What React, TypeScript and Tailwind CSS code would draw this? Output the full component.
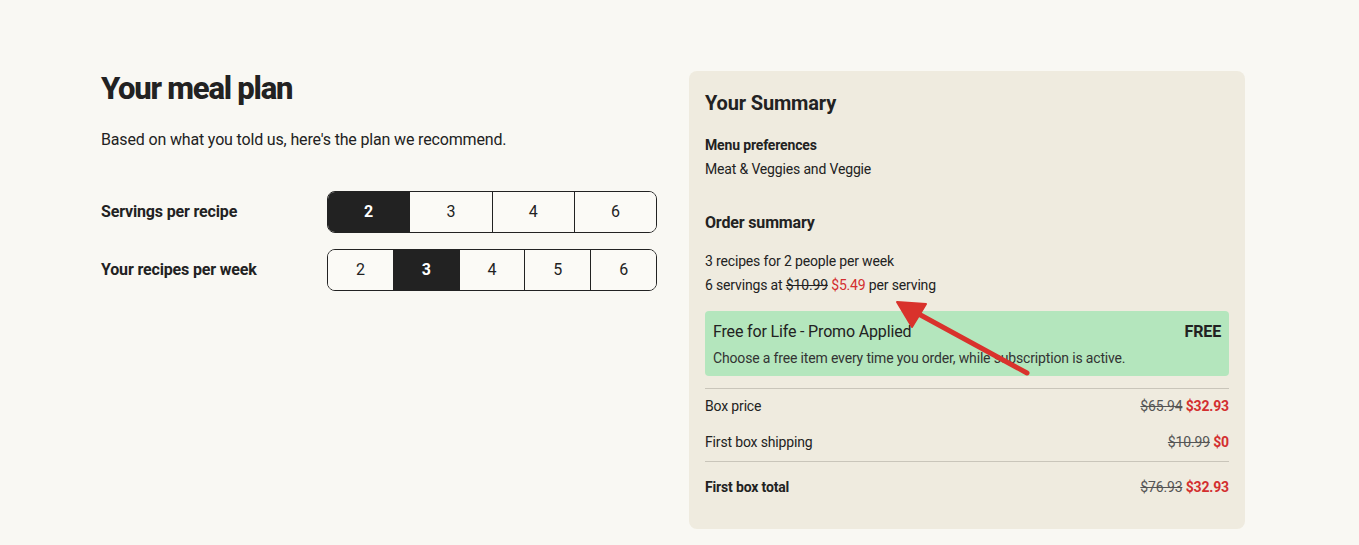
import React, { useState } from 'react';

const font = { fontFamily: 'Roboto, "Liberation Sans", sans-serif' };

function Segmented({ options, value, onChange }: { options: number[]; value: number; onChange: (v: number) => void }) {
  return (
    <div className="flex w-[330px] h-[42px] border border-[#222] rounded-[8px] overflow-hidden">
      {options.map((o, i) => (
        <button
          key={o}
          onClick={() => onChange(o)}
          className={`flex-1 flex items-center justify-center text-[16px] ${i > 0 ? 'border-l border-[#222]' : ''} ${
            o === value ? 'bg-[#222] text-white font-bold' : 'bg-[#fbfaf6] text-[#222]'
          }`}
        >
          {o}
        </button>
      ))}
    </div>
  );
}

function PriceRow({ label, was, now, bold }: { label: string; was: string; now: string; bold?: boolean }) {
  return (
    <div className="flex items-center justify-between text-[14px]">
      <span className={bold ? 'font-bold' : ''}>{label}</span>
      <span>
        <span className="line-through text-[#555]">{was}</span>{' '}
        <span className="font-bold text-[#d32f2f]">{now}</span>
      </span>
    </div>
  );
}

export default function App() {
  const [servings, setServings] = useState(2);
  const [recipes, setRecipes] = useState(3);

  return (
    <div className="min-h-screen bg-[#f9f8f3] text-[#222] relative tracking-[-0.01em]" style={font}>
      <div className="flex gap-[32px] pl-[101px] pt-[71px]">
        {/* Left column */}
        <div className="w-[556px]">
          <h1 className="text-[31px] font-extrabold tracking-[-0.04em] leading-none mt-[2px]">Your meal plan</h1>
          <p className="text-[16px] mt-[24px]">Based on what you told us, here's the plan we recommend.</p>

          <div className="mt-[39px] flex flex-col gap-[16px]">
            <div className="flex items-center">
              <span className="w-[226px] text-[16px] font-bold">Servings per recipe</span>
              <Segmented options={[2, 3, 4, 6]} value={servings} onChange={setServings} />
            </div>
            <div className="flex items-center">
              <span className="w-[226px] text-[16px] font-bold">Your recipes per week</span>
              <Segmented options={[2, 3, 4, 5, 6]} value={recipes} onChange={setRecipes} />
            </div>
          </div>
        </div>

        {/* Summary panel */}
        <div className="w-[556px] bg-[#efebdf] rounded-[8px] px-[16px] pt-[20px] pb-[31px]">
          <h2 className="text-[20px] font-bold leading-[24px]">Your Summary</h2>

          <div className="mt-[20px] text-[14px]">
            <div className="font-bold leading-[20px]">Menu preferences</div>
            <div className="mt-[4px] leading-[20px]">Meat &amp; Veggies and Veggie</div>
          </div>

          <h3 className="mt-[33px] text-[16px] font-bold leading-[22px]">Order summary</h3>

          <div className="mt-[15px] text-[14px] leading-[24px]">
            <div>3 recipes for 2 people per week</div>
            <div>
              6 servings at <span className="line-through">$10.99</span>{' '}
              <span className="text-[#d32f2f]">$5.49</span> per serving
            </div>
          </div>

          <div className="mt-[14px] bg-[#b4e6bd] rounded-[4px] px-[8px] pt-[9px] pb-[8px]">
            <div className="flex justify-between items-center">
              <span className="text-[16px] leading-[22px]">Free for Life - Promo Applied</span>
              <span className="text-[16px] font-bold">FREE</span>
            </div>
            <div className="mt-[4px] text-[14px] text-[#333] leading-[20px]">
              Choose a free item every time you order, while subscription is active.
            </div>
          </div>

          <div className="mt-[12px] border-t border-[#c9c5ba]" />
          <div className="pt-[7px] pb-[8px] flex flex-col gap-[15px]">
            <PriceRow label="Box price" was="$65.94" now="$32.93" />
            <PriceRow label="First box shipping" was="$10.99" now="$0" />
          </div>
          <div className="border-t border-[#c9c5ba]" />
          <div className="pt-[15px]">
            <PriceRow label="First box total" was="$76.93" now="$32.93" bold />
          </div>
        </div>
      </div>

      {/* Annotation arrow */}
      <svg className="absolute left-0 top-0 pointer-events-none" width="1359" height="545">
        <line x1="1027" y1="373" x2="915" y2="312" stroke="#d9322c" strokeWidth="5" strokeLinecap="round" />
        <polygon points="897,302 926,304 912,327" fill="#d9322c" stroke="#d9322c" strokeWidth="2" strokeLinejoin="round" />
      </svg>
    </div>
  );
}
